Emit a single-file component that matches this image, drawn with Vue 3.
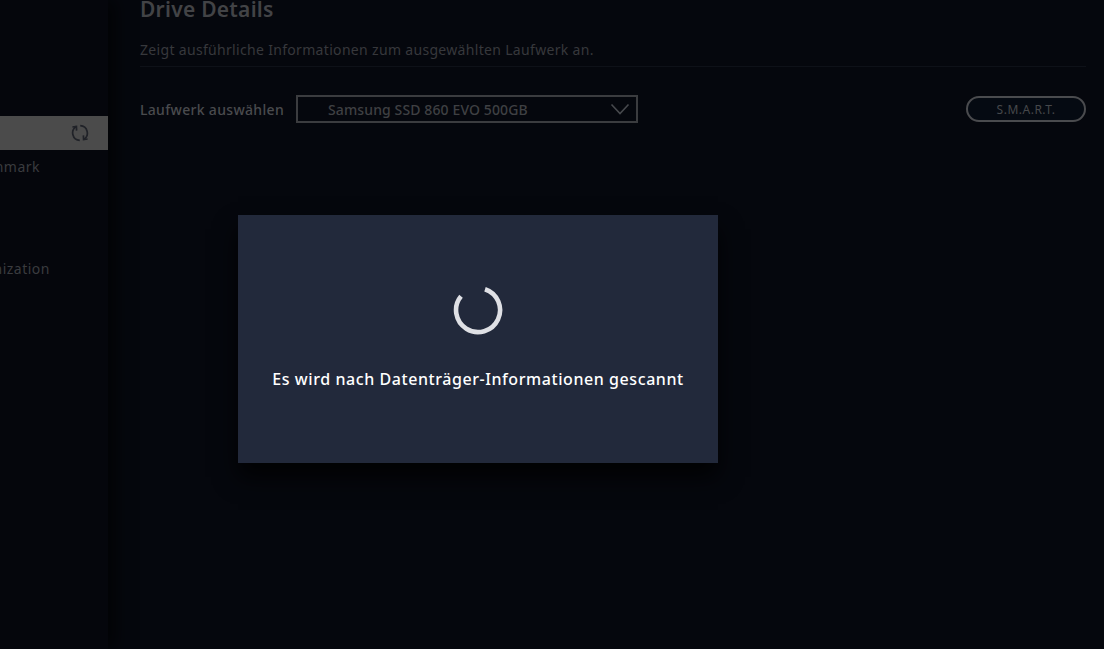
<script setup>
const sideItems = [
  { label: "", active: true },
  { label: "nmark", active: false },
  { label: "nization", active: false },
];
</script>

<template>
  <div class="page">
    <aside class="sidebar">
      <div class="side-active">
        <svg width="18" height="18" viewBox="0 0 18 18" fill="none" stroke="#202228" stroke-width="1.7">
          <path d="M9.2 1.6A7.4 7.4 0 0 1 12.6 15.4" />
          <path d="M8.8 16.4A7.4 7.4 0 0 1 5.4 2.6" />
          <path d="M12.4 11.4 12.6 15.6 16.6 15" />
          <path d="M5.6 6.6 5.4 2.4 1.4 3" />
        </svg>
      </div>
      <div class="side-item first">{{ sideItems[1].label }}</div>
      <div class="side-item second">{{ sideItems[2].label }}</div>
    </aside>

    <main class="content">
      <h1 class="title">Drive Details</h1>
      <p class="desc">Zeigt ausführliche Informationen zum ausgewählten Laufwerk an.</p>
      <div class="toolbar">
        <label class="select-label">Laufwerk auswählen</label>
        <div class="select">
          <span>Samsung SSD 860 EVO 500GB</span>
          <svg width="20" height="12" viewBox="0 0 20 12" fill="none" stroke="#47494d" stroke-width="1.6">
            <path d="M1.5 1.5 10 10.5 18.5 1.5" />
          </svg>
        </div>
        <button class="smart">S.M.A.R.T.</button>
      </div>
    </main>

    <div class="modal">
      <svg class="spinner" width="50" height="50" viewBox="0 0 50 50" fill="none" stroke="#dfe0e5" stroke-width="4.6">
        <path d="M32 4.2A22 22 0 1 1 8 11.2" />
      </svg>
      <p class="modal-text">Es wird nach Datenträger-Informationen gescannt</p>
    </div>
  </div>
</template>

<style>
html,
body {
  background: #05060c;
}
</style>

<style scoped>
.page {
  position: relative;
  display: flex;
  width: 1104px;
  height: 649px;
  overflow: hidden;
  background: #05070d;
  font-family: "Noto Sans", sans-serif;
}

.sidebar {
  flex: none;
  width: 108px;
  padding-top: 116px;
  background: #05060c;
  box-shadow: 8px 0 16px rgba(0, 0, 0, 0.6);
  box-sizing: border-box;
}

.side-active {
  display: flex;
  align-items: center;
  justify-content: flex-end;
  height: 34px;
  padding-right: 19px;
  background: #4b4b4b;
}

.side-item {
  display: flex;
  justify-content: flex-end;
  color: #3a3b3f;
  font-size: 14px;
  line-height: 18px;
  letter-spacing: 0.5px;
}

.side-item.first {
  width: 40px;
  margin-top: 8px;
}

.side-item.second {
  width: 50px;
  margin-top: 84px;
}

.content {
  flex: 1;
  min-width: 0;
  padding: 0 18px 0 32px;
}

.title {
  margin: -5px 0 0;
  color: #424346;
  font-size: 21px;
  font-weight: 600;
  line-height: 28px;
  letter-spacing: 0.25px;
}

.desc {
  margin: 17px 0 0;
  padding-bottom: 7px;
  color: #37383c;
  border-bottom: 1px solid #0e1118;
  font-size: 14px;
  line-height: 19px;
  letter-spacing: 0.32px;
}

.toolbar {
  display: flex;
  align-items: center;
  margin-top: 28px;
}

.select-label {
  width: 156px;
  flex: none;
  color: #4a4b4e;
  font-size: 14px;
  font-weight: 500;
  letter-spacing: 0.32px;
}

.select {
  display: flex;
  align-items: center;
  justify-content: space-between;
  width: 342px;
  height: 28px;
  box-sizing: border-box;
  padding: 0 6px 0 30px;
  border: 2px solid #3b3c3f;
  color: #3f4043;
  font-size: 14px;
  font-weight: 500;
  letter-spacing: 0.12px;
}

.smart {
  margin-left: auto;
  width: 120px;
  height: 26px;
  padding: 0;
  border: 2px solid #4a4b4e;
  border-radius: 13px;
  background: #050a12;
  color: #46484b;
  font-family: inherit;
  font-size: 12px;
  letter-spacing: 0.5px;
}

.modal {
  position: absolute;
  left: 238px;
  top: 215px;
  display: flex;
  flex-direction: column;
  align-items: center;
  width: 480px;
  height: 248px;
  box-sizing: border-box;
  padding-top: 70px;
  background: #22293b;
  box-shadow: 0 14px 22px rgba(0, 0, 0, 0.8);
}

.modal-text {
  margin: 33px 0 0;
  color: #ffffff;
  font-size: 16px;
  font-weight: 500;
  line-height: 22px;
  letter-spacing: 0.57px;
}
</style>
